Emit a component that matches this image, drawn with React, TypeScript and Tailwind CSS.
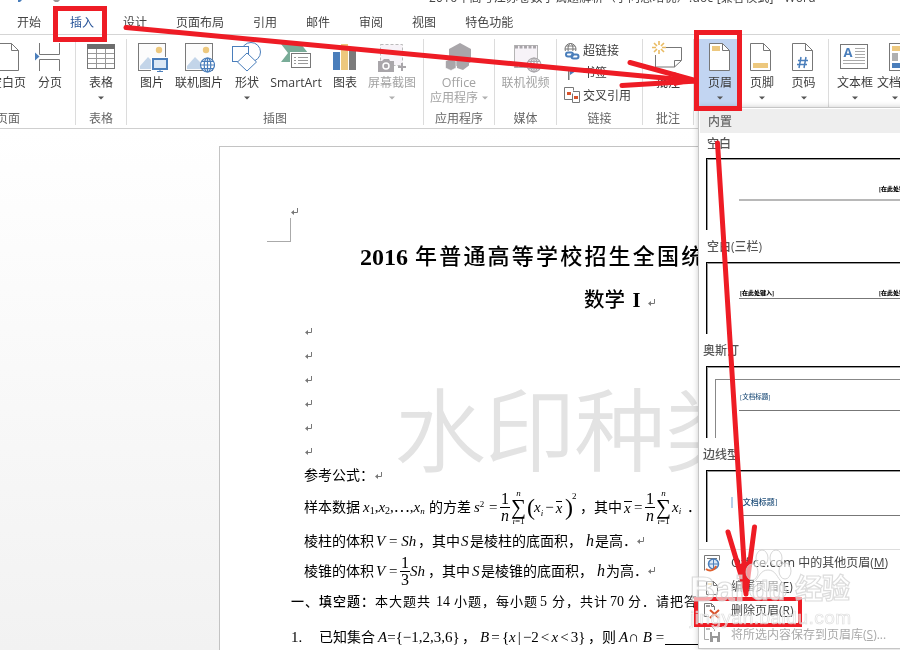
import type { ReactNode } from "react";

const BLUE = "#4a7ebb";

function Arrow({ color = "#666" }: { color?: string }) {
  return (
    <svg width="6" height="4" viewBox="0 0 6 4" className="shrink-0">
      <path d="M0 0.5h6L3 3.5z" fill={color} />
    </svg>
  );
}

interface ToolProps {
  className: string;
  icon: ReactNode;
  label: string;
  arrow?: boolean;
  disabled?: boolean;
}

function Tool({ className, icon, label, arrow, disabled }: ToolProps) {
  return (
    <div className={`flex h-[70px] shrink-0 flex-col items-center ${disabled ? "text-[#a3a3a3]" : "text-[#3c3c3c]"} ${className}`}>
      <svg width="32" height="32" viewBox="0 0 32 32" fill="none" className="mt-[2px] shrink-0">
        {icon}
      </svg>
      <span className="mt-px h-[18px] whitespace-nowrap leading-[18px]">{label}</span>
      {arrow && (
        <span className="mt-[3px] flex h-[5px] items-center">
          <Arrow color={disabled ? "#b0b0b0" : "#555"} />
        </span>
      )}
    </div>
  );
}

function Group({ className, label, children }: { className: string; label?: string; children: ReactNode }) {
  return (
    <div className={`flex h-[86px] shrink-0 flex-col border-r border-[#dcdcdc] ${className}`}>
      <div className="flex h-[70px] shrink-0">{children}</div>
      <div className="mt-[2px] flex h-[16px] shrink-0 items-center justify-center whitespace-nowrap leading-[16px] text-[#666]">{label}</div>
    </div>
  );
}

function Sheet({ children }: { children?: ReactNode }) {
  return (
    <>
      <path d="M5.5 2.5h13l7 7v20h-20z" fill="#fff" stroke="#777" />
      <path d="M18.5 2.5v7h7" stroke="#777" />
      {children}
    </>
  );
}

function Globe({ x, y, color }: { x: number; y: number; color: string }) {
  return (
    <g transform={`translate(${x} ${y})`} stroke={color} strokeWidth="1.2">
      <circle r="7" fill="#fff" />
      <ellipse rx="3.3" ry="7" />
      <path d="M-7 0H7M0-7V7M-6-3.6H6M-6 3.6H6" />
    </g>
  );
}

function PictureFrame() {
  return (
    <>
      <rect x="2.5" y="2.5" width="27" height="27" fill="#fcfcfc" stroke="#7a7a7a" />
      <circle cx="23" cy="9" r="3.2" fill="#edc87e" />
      <path d="M4 28v-3l8-9 12 12z" fill="#c3d5e9" />
    </>
  );
}

const tabs = ["开始", "插入", "设计", "页面布局", "引用", "邮件", "审阅", "视图", "特色功能"];

function Ribbon() {
  return (
    <div className="flex h-[94px] shrink-0 border-b border-[#cfcfcf] bg-white pt-[4px]">
      <Group className="w-[76px] pr-[59px]" label="页面">
        <Tool
          className="-ml-[18px] w-[52px]"
          label="空白页"
          icon={<g transform="translate(1 0)"><Sheet /></g>}
        />
        <Tool
          className="w-[32px]"
          label="分页"
          icon={
            <>
              <path d="M5.5 2v11.5h20V2M5.5 30V18.5h20V30" stroke="#777" />
              <path d="M1 11.5v8l4.5-4z" fill={BLUE} />
            </>
          }
        />
      </Group>
      <Group className="w-[51px] items-center" label="表格">
        <Tool
          className="w-[50px]"
          label="表格"
          arrow
          icon={
            <>
              <rect x="2.5" y="3.5" width="27" height="24" fill="#fff" stroke="#777" />
              <path d="M2 3h28v5H2z" fill="#6d6d6d" />
              <path d="M3 12.5h26M3 17.5h26M3 22.5h26M11.5 8v19M20.5 8v19" stroke="#999" />
            </>
          }
        />
      </Group>
      <Group className="w-[297px]" label="插图">
        <Tool
          className="ml-[9px] w-[32px]"
          label="图片"
          icon={
            <>
              <PictureFrame />
              <path d="M15 16h18v15H15z" fill="#fff" />
              <rect x="17" y="18" width="14" height="10" fill="#dce8f5" stroke={BLUE} strokeWidth="2" />
              <path d="M24 28v3M21 30.5h6" stroke={BLUE} />
            </>
          }
        />
        <Tool
          className="w-[62px]"
          label="联机图片"
          icon={
            <>
              <PictureFrame />
              <Globe x={24.5} y={24} color={BLUE} />
            </>
          }
        />
        <Tool
          className="w-[34px]"
          label="形状"
          arrow
          icon={
            <>
              <circle cx="20" cy="11" r="9.5" stroke={BLUE} />
              <rect x="1.5" y="5.5" width="16" height="15" fill="#fff" stroke={BLUE} />
              <path d="M16 12l9.5 9L16 30l-9.5-9z" fill="#fff" stroke={BLUE} />
            </>
          }
        />
        <Tool
          className="w-[64px] text-[12.3px]"
          label="SmartArt"
          icon={
            <>
              <path d="M1 3h20l7 9-7 9H1l7-9z" fill="#79ac98" />
              <rect x="10" y="11" width="22" height="17" fill="#fff" />
              <rect x="11.5" y="12.5" width="19" height="14" fill="#fff" stroke="#777" />
              <path d="M14 16.5h2M18 16.5h10M14 19.5h2M18 19.5h10M14 22.5h2M18 22.5h10" stroke="#999" />
            </>
          }
        />
        <Tool
          className="w-[34px]"
          label="图表"
          icon={
            <>
              <path d="M4 11h7v18H4z" fill={BLUE} />
              <path d="M12 3h7v26h-7z" fill="#edc87e" />
              <path d="M20 9h7v20h-7z" fill="#7b7b7b" />
            </>
          }
        />
        <Tool
          className="w-[60px]"
          label="屏幕截图"
          arrow
          disabled
          icon={
            <>
              <rect x="4.5" y="3.5" width="22" height="21" fill="#f7f3f8" stroke="#bbb" strokeDasharray="3 2" />
              <path d="M2 20h4l2-2h5l1 2h4v11H2z" fill="#a9a6aa" />
              <circle cx="10" cy="25" r="3" fill="#a9a6aa" stroke="#fff" strokeWidth="1.5" />
              <path d="M26 22v8M22 26h8" stroke="#a9a6aa" strokeWidth="2" />
            </>
          }
        />
      </Group>
      <Group className="w-[71px]" label="应用程序">
        <div className="flex w-[70px] flex-col items-center text-[#a3a3a3]">
          <svg width="32" height="32" viewBox="0 0 32 32" className="mt-[2px] shrink-0">
            <path d="M17 2l11 6v13l-11 6-11-6V8z" fill="#a9a6aa" />
            <path d="M8 17.5l5 2.5v7l-5 2.5L2.5 27v-7z" fill="#a9a6aa" stroke="#fff" strokeWidth=".6" />
            <path d="M14 19.5h12v5L20 29l-6-2z" fill="#a9a6aa" />
          </svg>
          <span className="mt-px h-[16px] text-[12.5px] leading-[18px]">Office</span>
          <span className="flex h-[16px] items-center gap-[4px] whitespace-nowrap leading-[16px]">
            应用程序
            <Arrow color="#b0b0b0" />
          </span>
        </div>
      </Group>
      <Group className="w-[62px]" label="媒体">
        <Tool
          className="w-[61px]"
          label="联机视频"
          disabled
          icon={
            <>
              <rect x="4.5" y="4.5" width="23" height="22" fill="#f7f3f8" stroke="#b5b5b5" />
              <path d="M5 6h23M5 25h23" stroke="#a9a6aa" strokeWidth="3" strokeDasharray="3 1.5" />
              <Globe x={24} y={24} color="#a9a6aa" />
            </>
          }
        />
      </Group>
      <Group className="w-[86px]" label="链接">
        <div className="flex flex-col pl-[7px] text-[#3c3c3c]">
          <div className="flex h-[23px] items-center gap-[3px]">
            <svg width="16" height="18" viewBox="0 0 16 18" fill="none">
              <g stroke="#777">
                <circle cx="6.5" cy="7" r="5.5" />
                <ellipse cx="6.5" cy="7" rx="2.5" ry="5.5" />
                <path d="M1 7h11M2 4h9" />
              </g>
              <path d="M0 9h16v8H0z" fill="#fff" />
              <g stroke={BLUE} strokeWidth="2">
                <rect x="2" y="10.5" width="7" height="4" rx="2" />
                <rect x="7.5" y="12.5" width="7" height="4" rx="2" />
              </g>
            </svg>
            超链接
          </div>
          <div className="flex h-[22px] items-center gap-[3px]">
            <svg width="16" height="16" viewBox="0 0 16 16">
              <path d="M4 2h1.5v13H4z" fill="#777" />
              <path d="M6 3l6 3-6 4z" fill={BLUE} />
            </svg>
            书签
          </div>
          <div className="flex h-[23px] items-center gap-[3px]">
            <svg width="16" height="17" viewBox="0 0 16 17" fill="none">
              <path d="M8 12.5H.5v-12h9v3M9 4.5h6.5v11H8.5v-9" stroke="#777" />
              <path d="M3 5h4v3H3zM10 9h4v3h-4z" fill="#d9532c" />
            </svg>
            交叉引用
          </div>
        </div>
      </Group>
      <Group className="w-[51px]" label="批注">
        <Tool
          className="w-[50px]"
          label="批注"
          icon={
            <>
              <path d="M14 6.5h15.5v13l-7 6.5h-19V14" fill="#fff" stroke="#777" />
              <path d="M29 19.5h-6.5V26" stroke="#777" />
              <path d="M7 0v4M7 9v4M0 6.5h4M10 6.5h4M2 2l3 3M9 8l3 3M12 2L9 5M5 8l-3 3" stroke="#e9bb62" strokeWidth="1.6" />
            </>
          }
        />
      </Group>
      <Group className="w-[135px]">
        <Tool
          className="ml-[5px] w-[42px] bg-[#c2d5f2]"
          label="页眉"
          arrow
          icon={<Sheet><path d="M8 5h8v5H8z" fill="#edc87e" /></Sheet>}
        />
        <Tool
          className="w-[42px]"
          label="页脚"
          arrow
          icon={<g transform="translate(-1 0)"><Sheet><path d="M8 22h15v5H8z" fill="#edc87e" /></Sheet></g>}
        />
        <Tool
          className="w-[41px]"
          label="页码"
          arrow
          icon={<g transform="translate(-1 0)"><Sheet><path d="M14 16l-2 11M19 16l-2 11M11 19.5h10M10 23.5h10" stroke={BLUE} strokeWidth="1.5" /></Sheet></g>}
        />
      </Group>
      <Group className="w-[90px]">
        <Tool
          className="ml-[7px] w-[38px]"
          label="文本框"
          arrow
          icon={
            <>
              <rect x="1.5" y="3.5" width="27" height="24" fill="#fff" stroke="#777" />
              <path d="M16 7.5h10M16 10.5h10M16 13.5h10M16 16.5h10M4 19.5h22M4 22.5h22" stroke="#aaa" />
              <text x="4.5" y="16" fill={BLUE} fontSize="13" fontWeight="700" fontFamily="Open Sans, sans-serif">A</text>
            </>
          }
        />
        <Tool
          className="w-[42px]"
          label="文档部"
          arrow
          icon={
            <>
              <rect x="10.5" y="2.5" width="21" height="27" fill="#fff" stroke="#777" />
              <path d="M13 5h16v5H13z" fill="#edc87e" />
              <path d="M13 12h6v8h-6z" fill="#b0b0b0" />
              <path d="M13 22h16v5H13z" fill={BLUE} />
            </>
          }
        />
      </Group>
    </div>
  );
}

function Mark() {
  return (
    <svg width="8" height="8" viewBox="0 0 8 8" fill="none" className="shrink-0">
      <path d="M6.5 0v4.5H2" stroke="#777" />
      <path d="M0 4.5L3 2v5z" fill="#777" />
    </svg>
  );
}

function Frac({ top, bottom }: { top: string; bottom: ReactNode }) {
  return (
    <span className="flex w-[10px] shrink-0 flex-col items-center text-[16px] leading-[16px]">
      <span className="w-full border-b border-black text-center">{top}</span>
      <span>{bottom}</span>
    </span>
  );
}

function Sum() {
  return (
    <span className="flex w-[17px] shrink-0 flex-col items-center leading-none">
      <i className="text-[9px] leading-[7px]">n</i>
      <span className="text-[21px] leading-[20px]">∑</span>
      <span className="text-[9px] leading-[8px]"><i>i</i>=1</span>
    </span>
  );
}

function DocumentPage() {
  return (
    <div className="ml-[219px] flex h-[510px] w-[681px] flex-col overflow-hidden whitespace-nowrap border-l border-t border-[#c3c3c3] bg-white font-['Liberation_Serif','Noto_Sans_CJK_SC',serif] text-[14px] text-black">
      <div className="ml-[71px] mt-[61px]"><Mark /></div>
      <div className="ml-[47px] mt-[2px] h-[24px] w-[24px] shrink-0 border-b border-r border-[#aaa]" />
      <div className="ml-[140px] flex h-[29px] shrink-0 items-center text-[24px]">
        <b>2016</b>
        <span className="ml-[7px] text-[22px] font-medium tracking-[2.2px]">年普通高等学校招生全国统一考试</span>
      </div>
      <div className="ml-[364px] mt-[14px] flex h-[30px] shrink-0 items-center gap-[2px] text-[20.5px] font-medium">
        <span>数学</span>
        <span className="w-[19px] text-center font-['Liberation_Serif'] font-bold">I</span>
        <span className="mt-[6px]"><Mark /></span>
      </div>
      <div className="ml-[85px] mt-[5px] flex shrink-0 flex-col">
        {[0, 1, 2, 3, 4, 5].map((n) => (
          <div key={n} className="flex h-[24px] items-center"><Mark /></div>
        ))}
      </div>
      <div className="ml-[84px] flex h-[23px] shrink-0 items-center">
        <span className="w-[71px]">参考公式：</span>
        <Mark />
      </div>
      <div className="ml-[84px] flex h-[40px] shrink-0 items-center">
        <span className="w-[59px] shrink-0">样本数据</span>
        <span className="w-[66px] shrink-0 text-[15px]">
          <i>x</i><sub className="text-[10px]">1</sub>,<i>x</i><sub className="text-[10px]">2</sub>,⋯,<i>x</i><sub className="text-[9px] italic">n</sub>
        </span>
        <span className="w-[45px] shrink-0">的方差</span>
        <span className="w-[15px] shrink-0 text-[15px]"><i>s</i><sup className="text-[9px]">2</sup></span>
        <span className="w-[11px] shrink-0 text-[15px]">=</span>
        <Frac top="1" bottom={<i>n</i>} />
        <Sum />
        <span className="w-[7px] shrink-0 text-[24px] leading-none">(</span>
        <span className="flex w-[31px] shrink-0 items-center text-[15px]">
          <i>x</i><sub className="mt-[8px] text-[9px] italic">i</sub>
          <span className="mx-[2px]">−</span>
          <i className="h-[12px] border-t border-black leading-[12px]">x</i>
        </span>
        <span className="w-[7px] shrink-0 text-[24px] leading-none">)</span>
        <span className="mb-[20px] w-[8px] shrink-0 text-[9px]">2</span>
        <span className="w-[14px] shrink-0">，</span>
        <span className="w-[30px] shrink-0">其中</span>
        <i className="h-[12px] w-[8px] shrink-0 border-t border-black text-[15px] leading-[12px]">x</i>
        <span className="ml-[2px] w-[11px] shrink-0 text-[15px]">=</span>
        <Frac top="1" bottom={<i>n</i>} />
        <Sum />
        <span className="w-[15px] shrink-0 text-[15px]"><i>x</i><sub className="text-[9px] italic">i</sub></span>
        <span>．</span>
      </div>
      <div className="ml-[84px] flex h-[28px] shrink-0 items-center">
        <span className="w-[72px]">棱柱的体积</span>
        <span className="w-[42px] text-[15px]"><i>V</i> = <i>Sh</i></span>
        <span className="w-[43px]">，其中</span>
        <i className="w-[9px] text-[15px]">S</i>
        <span className="w-[116px]">是棱柱的底面积，</span>
        <i className="w-[9px] text-[16px]">h</i>
        <span className="w-[42px]">是高．</span>
        <Mark />
      </div>
      <div className="ml-[84px] flex h-[32px] shrink-0 items-center">
        <span className="w-[72px]">棱锥的体积</span>
        <span className="w-[24px] text-[15px]"><i>V</i> =</span>
        <Frac top="1" bottom="3" />
        <i className="w-[18px] text-[15px]">Sh</i>
        <span className="w-[44px]">，其中</span>
        <i className="w-[9px] text-[15px]">S</i>
        <span className="w-[116px]">是棱锥的底面积，</span>
        <i className="w-[9px] text-[16px]">h</i>
        <span className="w-[42px]">为高．</span>
        <Mark />
      </div>
      <div className="ml-[71px] flex h-[29px] shrink-0 items-center text-[13px]">
        <span className="w-[84px] shrink-0 font-medium tracking-[1px]">一、填空题：</span>
        <span className="w-[61px] shrink-0 tracking-[1px]">本大题共</span>
        <span className="w-[18px] shrink-0 text-[14px]">14</span>
        <span className="w-[86px] shrink-0 tracking-[1px]">小题，每小题</span>
        <span className="w-[12px] shrink-0 text-[14px]">5</span>
        <span className="w-[58px] shrink-0 tracking-[1px]">分，共计</span>
        <span className="w-[18px] shrink-0 text-[14px]">70</span>
        <span className="tracking-[1px]">分．请把答案</span>
      </div>
      <div className="ml-[71px] flex h-[42px] shrink-0 items-center text-[15px]">
        <span className="w-[28px] shrink-0">1.</span>
        <span className="w-[59px] shrink-0 text-[14px]">已知集合</span>
        <span className="w-[84px] shrink-0"><i>A</i>={"{−1,2,3,6}"}</span>
        <span className="w-[18px] shrink-0 text-[14px]">，</span>
        <span className="w-[108px] shrink-0 tracking-[-0.2px] [word-spacing:-1.2px]"><i>B</i> = {"{"}<i>x</i> | −2 &lt; <i>x</i> &lt; 3{"}"}</span>
        <span className="w-[31px] shrink-0 text-[14px]">，则</span>
        <span className="w-[46px] shrink-0"><i>A</i>∩<i> B</i> =</span>
        <span className="mt-[14px] h-px w-[60px] shrink-0 bg-black" />
      </div>
    </div>
  );
}

function Preview({ children }: { children: ReactNode }) {
  return (
    <div className="ml-[7px] flex h-[72px] shrink-0 flex-col whitespace-nowrap border-l border-t border-black bg-white pl-px pt-px shadow-[inset_1px_1px_0_#999] font-['Liberation_Serif','Noto_Sans_CJK_SC',serif]">
      {children}
    </div>
  );
}

const labelClass = "flex h-[32px] shrink-0 items-center pt-[2px] text-[12px] font-medium text-[#555]";

function HeaderMenu() {
  return (
    <div className="absolute left-[698px] top-[107px] flex h-[542px] w-[210px] flex-col border border-[#c6c6c6] bg-white shadow-[0_0_6px_rgba(0,0,0,0.2)]">
      <div className="m-px mb-0 flex h-[24px] shrink-0 items-center bg-[#eee] pl-[8px] pt-[2px] font-medium text-[#666]">内置</div>
      <div className="flex h-[25px] shrink-0 items-center pb-[4px] pl-[8px] font-medium text-[#555]">空白</div>
      <Preview>
        <div className="ml-[171px] mt-[23px] h-[12px] text-[6px] font-black leading-[12px]">[在此处键入]</div>
        <div className="ml-[31px] mt-[4px] h-[2px] bg-[#b8b8b8]" />
      </Preview>
      <div className={`${labelClass} pl-[8px]`}>空白(三栏)</div>
      <Preview>
        <div className="ml-[32px] mt-[23px] flex h-[11px] text-[6px] font-black leading-[12px]">
          <span className="w-[139px] shrink-0">[在此处键入]</span>
          <span>[在此处键入]</span>
        </div>
        <div className="ml-[31px] h-px bg-[#777]" />
      </Preview>
      <div className={`${labelClass} pl-[4px]`}>奥斯汀</div>
      <Preview>
        <div className="ml-[7px] mt-[11px] flex h-[59px] flex-col border-l border-t border-[#888]">
          <div className="ml-[24px] mt-[11px] h-[12px] text-[6.5px] font-medium leading-[12px] text-[#1f4e79]">[文档标题]</div>
          <div className="ml-[23px] mt-[7px] h-px bg-[#777]" />
        </div>
      </Preview>
      <div className={`${labelClass} pl-[4px]`}>边线型</div>
      <Preview>
        <div className="ml-[23px] mt-[25px] flex h-[11px] items-center">
          <span className="h-[11px] w-[2px] bg-[#b4cfea]" />
          <span className="ml-[7px] text-[8px] font-medium text-[#1f4e79]">[文档标题]</span>
        </div>
        <div className="ml-[31px] mt-[7px] h-px bg-[#777]" />
      </Preview>
      <div className="mt-[7px] h-px shrink-0 bg-[#ddd]" />
      <div className="flex flex-col pl-[5px] pt-px text-[#444]">
        <div className="flex h-[24px] items-center gap-[10px]">
          <svg width="17" height="17" viewBox="0 0 17 17" fill="none" className="shrink-0">
            <path d="M.5 15.5V.5h15v5M3 3.5h10" stroke="#777" />
            <circle cx="9.5" cy="9" r="5" fill="#dce8f5" stroke={BLUE} strokeWidth="1.5" />
            <path d="M5 9h9M9.5 4v10" stroke={BLUE} />
            <path d="M2 14c4 3 9 1 10-3" stroke="#e0602f" strokeWidth="2" />
          </svg>
          <span className="whitespace-nowrap"><span className="text-[12.8px]">Office.com</span> 中的其他页眉(<u>M</u>)</span>
        </div>
        <div className="flex h-[24px] items-center gap-[10px]">
          <svg width="17" height="17" viewBox="0 0 17 17" fill="none">
            <path d="M2.5 2.5h7l4 4v9h-11zM9.5 2.5v4h4" stroke="#777" />
            <path d="M4 4h4v2H4z" fill="#edc87e" />
          </svg>
          <span>编辑页眉(<u>E</u>)</span>
        </div>
        <div className="flex h-[24px] items-center gap-[10px]">
          <svg width="17" height="17" viewBox="0 0 17 17" fill="none">
            <path d="M5 13.5H.5V.5h7l3 3V7M7.5.5v3h3" stroke="#777" />
            <path d="M2 2h4v2H2z" fill="#999" />
            <path d="M6 7l9 8M15 7l-9 8" stroke="#d9532c" strokeWidth="2" />
          </svg>
          <span>删除页眉(<u>R</u>)</span>
        </div>
        <div className="flex h-[23px] items-center gap-[10px] text-[#aaa]">
          <svg width="17" height="17" viewBox="0 0 17 17" fill="none" className="shrink-0">
            <path d="M5 13.5H.5V.5h7l3 3V5" stroke="#aaa" />
            <path d="M2 2h4v2H2z" fill="#bbb" />
            <path d="M6 6h10v10H6z" fill="#999" />
            <path d="M8 6h6v4H8zM9 12h4v4H9z" fill="#fff" />
          </svg>
          <span className="whitespace-nowrap">将所选内容保存到页眉库(<u>S</u>)...</span>
        </div>
      </div>
    </div>
  );
}

function Annotations() {
  return (
    <svg width="900" height="650" viewBox="0 0 900 650" fill="none" stroke="#ee1c25" className="absolute left-0 top-0">
      <g strokeWidth="5">
        <rect x="55.5" y="8.5" width="49" height="31" />
        <rect x="696.5" y="32.5" width="43" height="76" />
        <rect x="696" y="599" width="104" height="26" strokeWidth="4" />
      </g>
      <g strokeWidth="5" strokeLinecap="round">
        <path d="M126 27.5L696 81" />
        <path d="M630 62.5L697 81L622 85.5" />
        <path d="M717.5 143L746 594" />
        <path d="M728 532L746 592L754.5 527" />
      </g>
      <path d="M674 72L697 81L674 86z" fill="#ee1c25" stroke="none" />
      <path d="M737 565L746 597L751 560z" fill="#ee1c25" stroke="none" />
    </svg>
  );
}

// Site stamp, translucent so that the menu shows through
function Stamp() {
  return (
    <div className="absolute left-[690px] top-[545px] flex h-[85px] w-[175px] flex-col font-['Liberation_Sans','Noto_Sans_CJK_SC',sans-serif] font-bold text-white/60">
      <div className="flex h-[63px] items-end whitespace-nowrap text-[35px] leading-[38px] [-webkit-text-stroke:1.2px_rgba(205,205,205,0.7)]">
        <span className="w-[52px] shrink-0">Bai</span>
        <svg width="50" height="56" viewBox="0 0 50 56" fill="rgba(255,255,255,.55)" stroke="rgba(205,205,205,.8)" className="mb-[4px] shrink-0">
          <ellipse cx="10" cy="24" rx="6" ry="8" />
          <ellipse cx="20" cy="10" rx="6" ry="8" />
          <ellipse cx="34" cy="10" rx="6" ry="8" />
          <ellipse cx="43" cy="23" rx="6" ry="8" />
          <path d="M26 22c8 0 9 8 14 12 8 8 4 18-6 17-6-1-10-1-16 0-10 1-14-9-6-17 5-4 6-12 14-12z" />
        </svg>
        <span className="-ml-[40px] w-[43px] shrink-0 text-[27px] leading-[34px]">du</span>
        <span className="text-[28px] leading-[36px] tracking-[-1px]">经验</span>
      </div>
      <span className="text-[19px] font-normal leading-[20px] tracking-[0.5px] [-webkit-text-stroke:0.7px_rgba(215,215,215,0.8)]">jingyan.baidu.com</span>
    </div>
  );
}

export default function App() {
  return (
    <div className="relative flex h-[650px] w-[900px] flex-col overflow-hidden bg-white font-['Open_Sans','Noto_Sans_CJK_SC',sans-serif] text-[12px]">
      <div className="flex h-[8px] shrink-0 overflow-hidden">
        <svg width="70" height="8" viewBox="0 0 70 8" className="shrink-0">
          <path d="M18 0h4l-2 2h-2z" fill={BLUE} />
          <path d="M53 0h7l-2 2h-3z" fill="#999" />
        </svg>
        <span className="-mt-[11px] ml-[359px] h-[18px] whitespace-nowrap leading-[18px] tracking-[0.2px] text-[#444]">
          2016年高考江苏卷数学试题解析（学问思培优）.doc [兼容模式] - Word
        </span>
      </div>
      <div className="flex h-[27px] shrink-0 items-center gap-[29px] whitespace-nowrap border-b border-[#d5d5d5] pl-[17px] pt-[3px] text-[#444]">
        {tabs.map((tab) => (
          <span key={tab} className={tab === "插入" ? "text-[#2b579a]" : ""}>{tab}</span>
        ))}
      </div>
      <Ribbon />
      <div className="h-[521px] shrink-0 bg-linear-to-b from-white to-[#f2f2f2] pt-[17px]">
        <DocumentPage />
      </div>
      <div className="absolute left-[395px] top-[367px] w-[303px] overflow-hidden whitespace-nowrap text-[90px] font-light leading-[124px] text-[#e3e3e3] mix-blend-multiply [-webkit-text-stroke:1.6px_#e3e3e3]">
        水印种类
      </div>
      <HeaderMenu />
      <Annotations />
      <Stamp />
    </div>
  );
}
